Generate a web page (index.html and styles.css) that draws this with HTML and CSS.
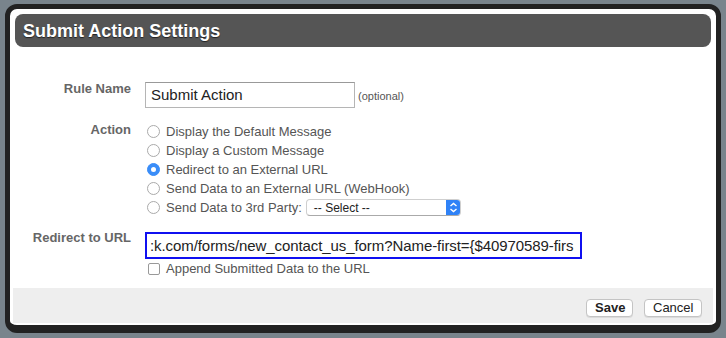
FILE: index.html
```html
<!DOCTYPE html>
<html lang="en">
<head>
    <meta charset="UTF-8">
    <title>Submit Action Settings</title>
    <link rel="stylesheet" href="styles.css">
</head>
<body>
    <div class="dialog">
        <div class="dialog-title">Submit Action Settings</div>

        <div class="dialog-body">
            <div class="row">
                <div class="row-label">Rule Name</div>
                <div class="row-field field-offset">
                    <div class="text-input">Submit Action</div>
                    <span class="hint">(optional)</span>
                </div>
            </div>

            <div class="row row-action">
                <div class="row-label">Action</div>
                <div class="row-field option-list">
                    <div class="option"><span class="radio"></span>Display the Default Message</div>
                    <div class="option"><span class="radio"></span>Display a Custom Message</div>
                    <div class="option"><span class="radio checked"></span>Redirect to an External URL</div>
                    <div class="option"><span class="radio"></span>Send Data to an External URL (WebHook)</div>
                    <div class="option">
                        <span class="radio"></span>Send Data to 3rd Party:
                        <div class="select">
                            <span>-- Select --</span>
                            <span class="select-arrows">
                                <svg width="9" height="11" viewBox="0 0 9 11">
                                    <path d="M1.5 4 L4.5 1.5 L7.5 4 M1.5 7 L4.5 9.5 L7.5 7" fill="none" stroke="#fff" stroke-width="1.4"/>
                                </svg>
                            </span>
                        </div>
                    </div>
                </div>
            </div>

            <div class="row row-url">
                <div class="row-label">Redirect to URL</div>
                <div class="row-field">
                    <div class="url-input">:k.com/forms/new_contact_us_form?Name-first={$40970589-firs</div>
                    <div class="option check-line"><span class="checkbox"></span>Append Submitted Data to the URL</div>
                </div>
            </div>
        </div>

        <div class="dialog-footer">
            <button class="btn btn-save">Save</button>
            <button class="btn">Cancel</button>
        </div>
    </div>
</body>
</html>
```

FILE: styles.css
```css
* {
    margin: 0;
    padding: 0;
    box-sizing: border-box;
}

body {
    background-color: #79848c;
    font-family: 'Liberation Sans', Arial, sans-serif;
    height: 338px;
    overflow: hidden;
}

.dialog {
    margin: 4px 0 0 5px;
    width: 716px;
    height: 329px;
    background: white;
    border: 5px solid #222;
    border-bottom-width: 8px;
    border-radius: 12px;
    display: flex;
    flex-direction: column;
}

.dialog-title {
    margin: 5px 5px 0 5px;
    height: 33px;
    background: #555;
    border-radius: 8px;
    color: white;
    font-size: 18px;
    font-weight: bold;
    line-height: 34px;
    padding-left: 8px;
    text-shadow: 0 1px 1px #222;
}

.dialog-body {
    flex: 1;
    padding-top: 34px;
}

.row {
    display: flex;
}

.row-label {
    width: 121px;
    margin-right: 14px;
    text-align: right;
    font-size: 13px;
    font-weight: bold;
    color: #666;
    line-height: 16px;
}

.field-offset {
    display: flex;
    align-items: center;
    margin-top: 1px;
}

.text-input {
    width: 210px;
    height: 26px;
    border: 1px solid #b5b5b5;
    border-top-color: #999;
    padding-left: 5px;
    font-size: 15px;
    line-height: 24px;
    color: #222;
}

.hint {
    font-size: 11px;
    color: #555;
    margin-left: 3px;
    margin-top: 2px;
}

.row-action {
    margin-top: 14px;
}

.option {
    display: flex;
    align-items: center;
    height: 19px;
    font-size: 13px;
    color: #555;
}

.radio {
    width: 13px;
    height: 13px;
    border: 1px solid #aaa;
    border-radius: 50%;
    margin: 0 6px 0 2px;
    background: white;
    display: flex;
    align-items: center;
    justify-content: center;
}

.radio.checked {
    background: #3a8df8;
    border-color: #3a8df8;
}

.radio.checked::after {
    content: "";
    width: 5px;
    height: 5px;
    border-radius: 50%;
    background: white;
}

.select {
    margin-left: 4px;
    width: 155px;
    height: 17px;
    border: 1px solid #cfcfcf;
    border-bottom-color: #aaa;
    border-radius: 4px;
    display: flex;
    align-items: center;
    justify-content: space-between;
    font-size: 12px;
    color: #222;
    padding-left: 7px;
    overflow: hidden;
}

.select-arrows {
    width: 15px;
    height: 17px;
    margin-top: -1px;
    margin-right: -1px;
    background: #2f82f7;
    border-radius: 0 4px 4px 0;
    display: flex;
    align-items: center;
    justify-content: center;
}

.row-url {
    margin-top: 13px;
}

.url-input {
    margin-top: 2px;
    width: 437px;
    height: 27px;
    border: 2px solid #1010f0;
    padding-left: 3px;
    font-size: 15px;
    letter-spacing: -0.08px;
    line-height: 23px;
    color: #222;
    white-space: nowrap;
}

.checkbox {
    width: 12px;
    height: 12px;
    border: 1px solid #999;
    border-radius: 2px;
    margin: 0 6px 0 3px;
}

.dialog-footer {
    height: 35px;
    margin: 0 3px 2px 3px;
    background: #eee;
    display: flex;
    justify-content: flex-end;
    align-items: flex-start;
    padding: 11px 11px 0 0;
    gap: 11px;
}

.btn {
    height: 18px;
    background: white;
    border: 1px solid #c4c4c4;
    border-radius: 4px;
    box-shadow: 0 1px 0 rgba(0, 0, 0, 0.08);
    font-family: 'Liberation Sans', Arial, sans-serif;
    font-size: 13px;
    color: #222;
    padding: 0 8px;
    line-height: 16px;
}

.btn-save {
    width: 47px;
    font-weight: bold;
}

.btn + .btn {
    width: 58px;
}
```
